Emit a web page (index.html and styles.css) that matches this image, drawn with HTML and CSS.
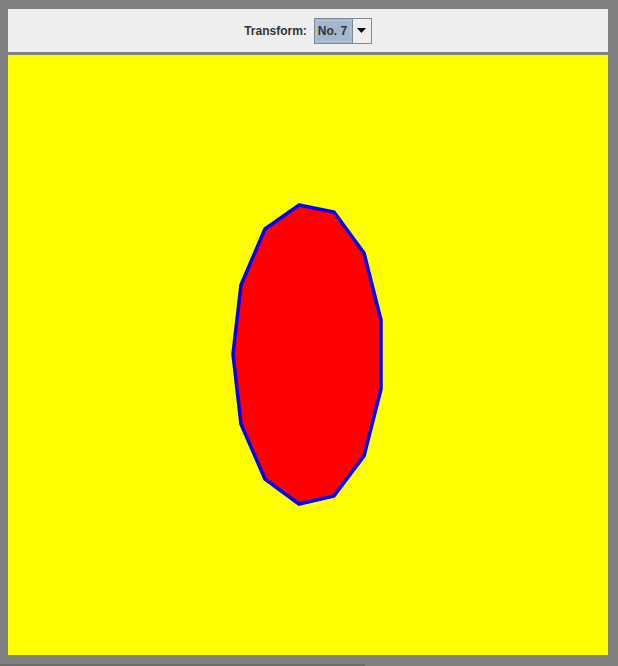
FILE: index.html
```html
<!DOCTYPE html>
<html>
<head>
<meta charset="utf-8">
<link rel="stylesheet" href="styles.css">
</head>
<body>
<div class="frame">
  <div class="toolbar">
    <span class="label">Transform:</span>
    <div class="combo">
      <div class="combo-value"><span>No. 7</span></div>
      <div class="combo-arrow">
        <svg width="9" height="5" viewBox="0 0 9 5"><polygon points="0,0 9,0 4.5,5" fill="#000"/></svg>
      </div>
    </div>
  </div>
  <div class="canvas">
    <svg width="600" height="600" viewBox="0 0 600 600">
      <polygon points="291,150 326,157 356,198 373,265 373,334 356,401 326,441 291,449 257,424 233,369 225,299 233,230 257,174" fill="#ff0000" stroke="#0000ff" stroke-width="3.5" stroke-linejoin="miter"/>
    </svg>
  </div>
  <div class="spacer"></div>
  <div class="edge"></div>
</div>
</body>
</html>
```
FILE: styles.css
```css
html, body {
  margin: 0;
  padding: 0;
  height: 666px;
  overflow: hidden;
  background: #808080;
}
.frame {
  padding: 9px 10px 0 8px;
  display: flex;
  flex-direction: column;
}
.toolbar {
  width: 600px;
  height: 43px;
  background: #eeeeee;
  display: flex;
  align-items: center;
  justify-content: center;
  gap: 7px;
  margin-bottom: 3px;
  font-family: "Liberation Sans", Arial, sans-serif;
  font-weight: bold;
  font-size: 12px;
  color: #333333;
}
.label {
  line-height: 14px;
}
.combo {
  display: flex;
  height: 26px;
  border: 1px solid #7a8a99;
  box-sizing: border-box;
  background: #eeeeee;
}
.combo-value {
  width: 37px;
  background: #a3b8cc;
  padding: 1px;
  box-sizing: border-box;
  display: flex;
}
.combo-value span {
  flex: 1;
  border: 1px solid #b4c6d8;
  display: flex;
  align-items: center;
  padding-left: 1px;
  line-height: 14px;
}
.combo-arrow {
  width: 18px;
  border-left: 1px solid #7a8a99;
  display: flex;
  align-items: center;
  justify-content: center;
  background: #eeeeee;
}
.combo-arrow svg {
  display: block;
}
.canvas {
  width: 600px;
  height: 600px;
  background: #ffff00;
}
.canvas svg {
  display: block;
}
.spacer {
  height: 9px;
}
.edge {
  width: 365px;
  height: 2px;
  margin-left: -8px;
  background: #6c6c6c;
}
```
